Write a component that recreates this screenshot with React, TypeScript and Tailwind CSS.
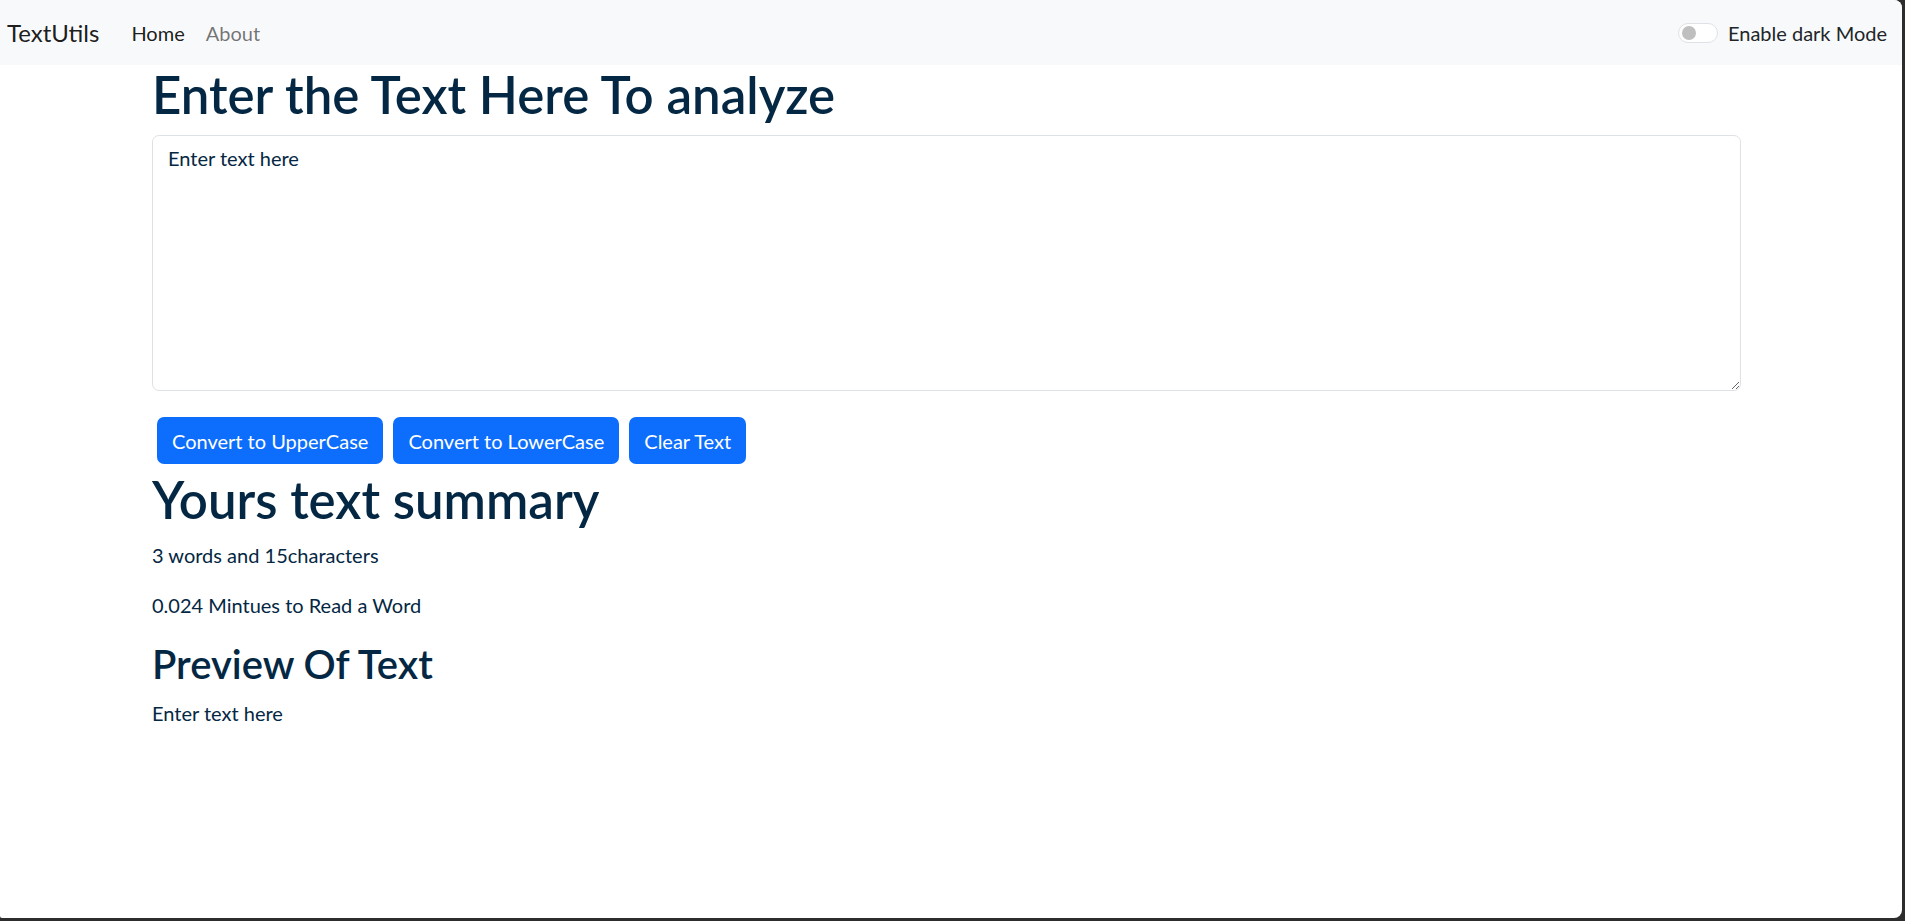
import { useState } from "react";

export default function App() {
  const [text, setText] = useState("Enter text here");
  const words = text.split(/\s+/).filter((w) => w.length !== 0).length;

  return (
    <div className="relative h-[921px] w-[1905px] overflow-hidden bg-[#2d2d2d] font-['Lato',sans-serif]">
      <div className="relative h-[918px] w-[1902px] overflow-hidden rounded-r-[8px] rounded-bl-[2px] bg-white">
        <nav className="flex h-[65px] items-center justify-between bg-[#f8f9fa] pl-[7px] pr-[15px]">
          <div className="flex items-center">
            <span className="text-[24px] text-black/90">TextUtils</span>
            <span className="ml-[32px] text-[20px] text-black/90">Home</span>
            <span className="ml-[21px] text-[20px] text-black/55">About</span>
          </div>
          <label className="flex items-center gap-[10px]">
            <span className="relative h-[20px] w-[40px] rounded-full border border-[#dee2e6] bg-white">
              <span className="absolute left-[3px] top-[2.5px] h-[14px] w-[14px] rounded-full bg-[#bfbfbf]" />
            </span>
            <span className="text-[20px] text-[#212529]">Enable dark Mode</span>
          </label>
        </nav>

        <main className="ml-[152px] w-[1589px] text-[#042743]">
          <h1 className="mb-[10px] text-[51px] font-semibold leading-[60px]">Enter the Text Here To analyze</h1>
          <textarea
            value={text}
            onChange={(e) => setText(e.target.value)}
            rows={8}
            className="mb-[21px] block h-[256px] w-full rounded-[7px] border border-[#dee2e6] bg-white px-[15px] py-[7px] text-[20px] leading-[30px] text-[#042743] outline-none"
          />
          <div className="flex gap-[10px] px-[5px] pb-[6px] pt-[5px]">
            <button className="h-[47px] rounded-[7px] bg-[#0d6efd] px-[15px] text-[20px] text-white">Convert to UpperCase</button>
            <button className="h-[47px] rounded-[7px] bg-[#0d6efd] px-[15px] text-[20px] text-white">Convert to LowerCase</button>
            <button className="h-[47px] rounded-[7px] bg-[#0d6efd] px-[15px] text-[20px] text-white">Clear Text</button>
          </div>
          <h1 className="mb-[10px] text-[51px] font-semibold leading-[60px]">Yours text summary</h1>
          <p className="mb-[20px] text-[20px] leading-[30px]">{words} words and {text.length}characters</p>
          <p className="mb-[20px] text-[20px] leading-[30px]">{(0.008 * words).toFixed(3)} Mintues to Read a Word</p>
          <h2 className="mb-[10px] text-[40px] font-semibold leading-[48px]">Preview Of Text</h2>
          <p className="text-[20px] leading-[30px]">{text}</p>
        </main>
      </div>
    </div>
  );
}
